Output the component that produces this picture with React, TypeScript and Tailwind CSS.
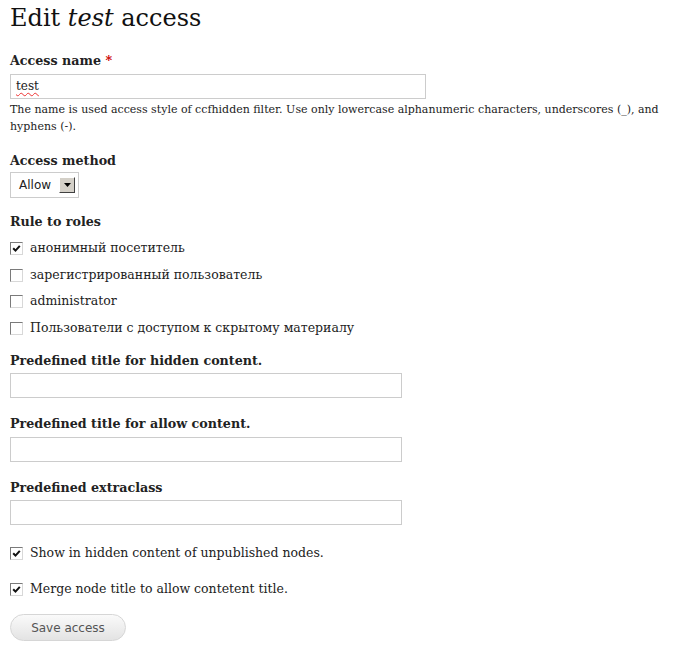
import React from 'react';

const serif = { fontFamily: '"DejaVu Serif", "Liberation Serif", serif' };

const Check = ({ checked }: { checked?: boolean }) => (
  <span className="inline-flex h-[13px] w-[13px] shrink-0 items-center justify-center border border-t-[#7a7a7a] border-l-[#7a7a7a] border-r-[#d8d8d8] border-b-[#d8d8d8] bg-white">
    {checked && (
      <svg viewBox="0 0 9 9" className="h-[9px] w-[9px]">
        <polyline points="1.2,4.2 3.5,6.6 7.8,1.8" fill="none" stroke="#111" strokeWidth="2" />
      </svg>
    )}
  </span>
);

const CheckRow = ({ label, checked }: { label: string; checked?: boolean }) => (
  <div className="flex h-[26.7px] items-center gap-[7px] pl-[10px] text-[12.5px] text-[#222]">
    <Check checked={checked} />
    <span>{label}</span>
  </div>
);

const Label = ({ children }: { children: React.ReactNode }) => (
  <div className="h-[18px] text-[12.7px] font-bold leading-[18px] text-[#222]">{children}</div>
);

const TextBox = ({ w, value }: { w: string; value?: string }) => (
  <div className={`h-[25px] ${w} border border-[#ccc] bg-white px-[5px] text-[12px] leading-[23px] text-[#222]`}>
    {value && <span className="underline decoration-wavy decoration-[#e33] decoration-1 underline-offset-2">{value}</span>}
  </div>
);

export default function App() {
  return (
    <div className="min-h-screen bg-white pl-[10px] text-[#222]" style={serif}>
      <h1 className="text-[24px] font-normal leading-[36px] text-[#111]">
        Edit <em>test</em> access
      </h1>

      <div className="mt-[16px]">
        <Label>
          Access name <span className="text-[#c00]">*</span>
        </Label>
        <div className="mt-[4px]">
          <TextBox w="w-[416px]" value="test" />
        </div>
        <p className="mt-[2px] pr-[8px] text-[11px] leading-[17px] text-[#222]">
          The name is used access style of ccfhidden filter. Use only lowercase alphanumeric characters, underscores (_), and hyphens (-).
        </p>
      </div>

      <div className="mt-[17px]">
        <Label>Access method</Label>
        <div
          className="mt-[2px] flex h-[26px] w-[69px] items-center border border-[#ccc] bg-white pl-[8px] pr-[3px]"
          style={{ fontFamily: '"DejaVu Sans", Verdana, sans-serif' }}
        >
          <span className="flex-1 text-[12px] text-[#222]">Allow</span>
          <span className="flex h-[16px] w-[16px] items-center justify-center border border-t-[#fff] border-l-[#fff] border-r-[#404040] border-b-[#404040] bg-[#d4d0c8]">
            <svg viewBox="0 0 7 4" className="h-[4px] w-[7px]">
              <path d="M0 0 H7 L3.5 4 Z" fill="#000" />
            </svg>
          </span>
        </div>
      </div>

      <div className="mt-[15px]">
        <Label>Rule to roles</Label>
        <div className="-ml-[10px] mt-[4px]">
          <CheckRow label="анонимный посетитель" checked />
          <CheckRow label="зарегистрированный пользователь" />
          <CheckRow label="administrator" />
          <CheckRow label="Пользователи с доступом к скрытому материалу" />
        </div>
      </div>

      <div className="mt-[10px]">
        <Label>Predefined title for hidden content.</Label>
        <div className="mt-[3px]">
          <TextBox w="w-[392px]" />
        </div>
      </div>

      <div className="mt-[17px]">
        <Label>Predefined title for allow content.</Label>
        <div className="mt-[4px]">
          <TextBox w="w-[392px]" />
        </div>
      </div>

      <div className="mt-[17px]">
        <Label>Predefined extraclass</Label>
        <div className="mt-[3px]">
          <TextBox w="w-[392px]" />
        </div>
      </div>

      <div className="-ml-[10px] mt-[15px]">
        <CheckRow label="Show in hidden content of unpublished nodes." checked />
      </div>
      <div className="-ml-[10px] mt-[10px]">
        <CheckRow label="Merge node title to allow contetent title." checked />
      </div>

      <button
        className="mt-[11px] h-[27px] w-[116px] rounded-full border border-[#d6d6d6] bg-gradient-to-b from-[#fafafa] to-[#e3e3e3] text-[12px] text-[#555]"
        style={{ fontFamily: '"DejaVu Sans", Verdana, sans-serif' }}
      >
        Save access
      </button>
    </div>
  );
}
